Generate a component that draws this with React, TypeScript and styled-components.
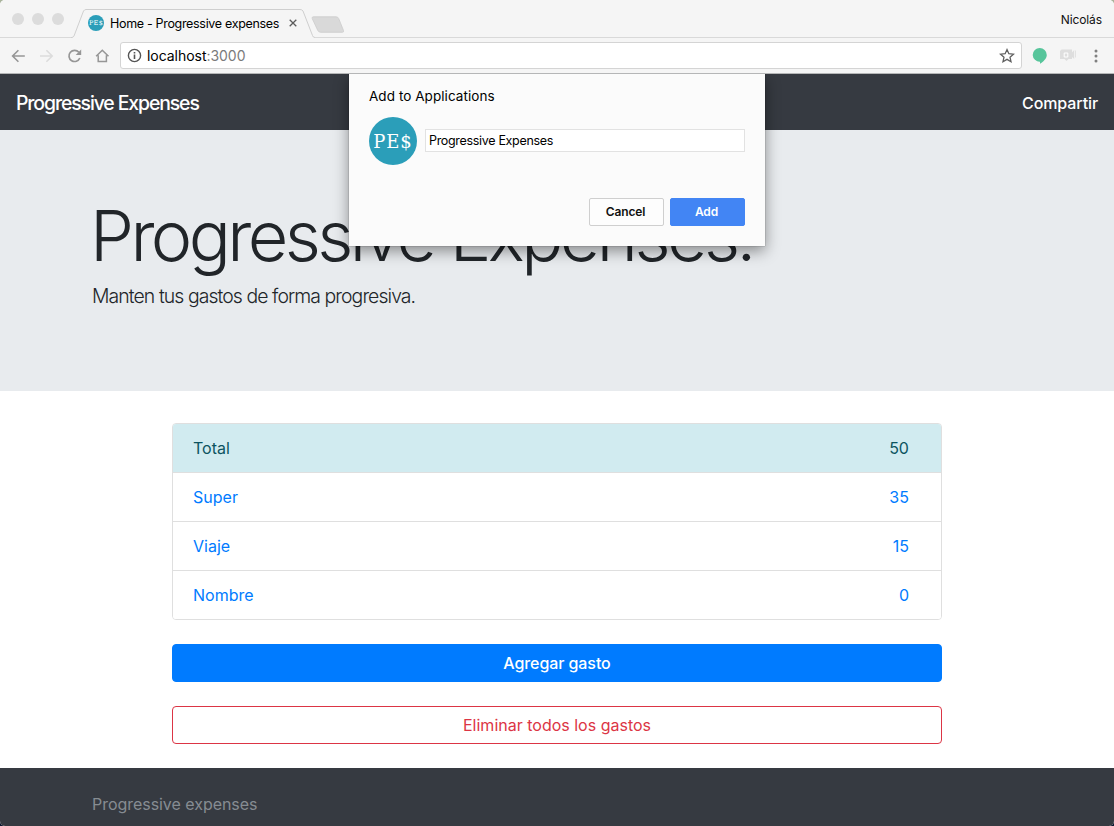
import React from "react";
import styled, { createGlobalStyle } from "styled-components";

const GlobalStyle = createGlobalStyle`
  *, *::before, *::after { box-sizing: border-box; }
  html, body { margin: 0; padding: 0; }
  body {
    font-family: Inter, "Liberation Sans", sans-serif;
    background: linear-gradient(#a9b49c 0 50%, #0c1830 50%);
    overflow: hidden;
  }
  button, input { font-family: inherit; margin: 0; }
`;

const Window = styled.div`
  width: 1114px;
  height: 826px;
  border-radius: 5px;
  overflow: hidden;
  background: #fff;
  display: flex;
  flex-direction: column;
  position: relative;
`;

const TabStrip = styled.div`
  height: 38px;
  flex: none;
  display: flex;
  background: #f5f5f5;
  box-shadow: inset 0 -1px #d9d9d9;
`;

const Lights = styled.div`
  display: flex;
  gap: 8px;
  padding: 13px 0 0 12px;
  width: 71px;
  flex: none;
`;

const Light = styled.span`
  width: 12px;
  height: 12px;
  border-radius: 50%;
  background: #dcdcdc;
`;

const Tab = styled.div`
  position: relative;
  width: 244px;
  flex: none;
  display: flex;
  align-items: center;
  padding: 8px 0 0 17px;
`;

const TabShape = styled.svg`
  position: absolute;
  left: 0;
  top: 8px;
`;

const Badge = styled.span<{ $size: number; $font: number }>`
  position: relative;
  width: ${(p) => p.$size}px;
  height: ${(p) => p.$size}px;
  flex: none;
  border-radius: 50%;
  background: #2b9eb9;
  color: #fff;
  display: flex;
  align-items: center;
  justify-content: center;
  font-size: ${(p) => p.$font}px;
  line-height: 1;
`;

const BadgeText = styled.span<{ $shift: number }>`
  font-family: "DejaVu Serif", serif;
  letter-spacing: 0.05em;
  padding-top: ${(p) => p.$shift}px;
  white-space: nowrap;
`;

const TabTitle = styled.span`
  position: relative;
  margin-left: 6px;
  width: 170px;
  font-size: 12.5px;
  letter-spacing: -0.32px;
  color: #000;
  white-space: nowrap;
`;

const CloseIcon = styled.svg`
  position: relative;
  margin-left: 9px;
`;

const NewTab = styled.svg`
  margin: 16px 0 0 -4px;
`;

const Profile = styled.span`
  margin: 12px 12px 0 auto;
  font-size: 12px;
  letter-spacing: -0.1px;
  line-height: 16px;
  color: #111;
`;

const Toolbar = styled.div`
  height: 36px;
  flex: none;
  display: flex;
  align-items: center;
  background: #f5f5f5;
  border-bottom: 1px solid #b5b6b7;
  padding: 0 10px;
`;

const NavIcons = styled.div`
  display: flex;
  gap: 10px;
  width: 110px;
  flex: none;
`;

const Address = styled.div`
  width: 902px;
  height: 27px;
  flex: none;
  display: flex;
  align-items: center;
  background: #fff;
  border: 1px solid #d4d4d4;
  border-radius: 3px;
  padding: 0 5px 0 5px;
`;

const Url = styled.span`
  flex: 1;
  margin-left: 4px;
  font-size: 14px;
  letter-spacing: -0.04px;
  color: #000;
  white-space: nowrap;
`;

const Port = styled.span`
  color: #7b7b7b;
`;

const Extensions = styled.div`
  display: flex;
  align-items: center;
  margin-left: 8px;
`;

const CameraIcon = styled.svg`
  margin-left: 11px;
`;

const MenuIcon = styled.svg`
  margin-left: 16px;
`;

const Navbar = styled.nav`
  height: 56px;
  flex: none;
  display: flex;
  align-items: center;
  justify-content: space-between;
  padding: 1px 16px 0;
  background: #363a41;
  color: #fff;
`;

const Brand = styled.span`
  font-size: 19.4px;
  font-weight: 450;
  letter-spacing: -1.1px;
  white-space: nowrap;
`;

const Share = styled.span`
  font-size: 16px;
  font-weight: 450;
  letter-spacing: -0.1px;
`;

const Jumbotron = styled.header`
  height: 261px;
  flex: none;
  padding: 63px 92px;
  background: #e8ebee;
  color: #212529;
`;

const Display = styled.h1`
  margin: 0 0 2px -2px;
  font-size: 70px;
  font-weight: 300;
  line-height: 85px;
  letter-spacing: -3.58px;
  white-space: nowrap;
`;

const Lead = styled.p`
  margin: 0;
  padding-top: 1px;
  font-size: 19.4px;
  font-weight: 300;
  line-height: 30px;
  letter-spacing: -0.91px;
`;

const Main = styled.main`
  width: 770px;
  margin: 32px auto 0;
  height: 345px;
  flex: none;
  display: flex;
  flex-direction: column;
  gap: 24px;
`;

const List = styled.div`
  height: 197px;
  flex: none;
  border: 1px solid #dfdfdf;
  border-radius: 4px;
  overflow: hidden;
`;

const Row = styled.div<{ $total?: boolean }>`
  display: flex;
  justify-content: space-between;
  height: ${(p) => (p.$total ? 48 : 49)}px;
  padding: 0 32px 0 20px;
  font-size: 16px;
  letter-spacing: 0.02px;
  line-height: 48px;
  color: ${(p) => (p.$total ? "#0c5460" : "#007bff")};
  background: ${(p) => (p.$total ? "#d1ebf0" : "#fff")};
  & + & { border-top: 1px solid #dfdfdf; }
`;

const ActionButton = styled.button<{ $outline?: boolean }>`
  height: 38px;
  flex: none;
  border: 1px solid ${(p) => (p.$outline ? "#dc3545" : "#007bff")};
  border-radius: 4px;
  background: ${(p) => (p.$outline ? "#fff" : "#007bff")};
  color: ${(p) => (p.$outline ? "#dc3545" : "#fff")};
  font-size: 16px;
  font-weight: ${(p) => (p.$outline ? 400 : 450)};
  letter-spacing: ${(p) => (p.$outline ? 0 : -0.08)}px;
  padding: 0;
`;

const Footer = styled.footer`
  flex: 1;
  padding: 24px 92px;
  background: #363a41;
  color: #868c92;
  font-size: 16px;
  letter-spacing: -0.04px;
  line-height: 24px;
`;

const Dialog = styled.section`
  position: absolute;
  left: 349px;
  top: 74px;
  width: 416px;
  height: 172px;
  padding: 14px 20px 20px;
  display: flex;
  flex-direction: column;
  background: #fbfbfb;
  box-shadow: 0 0 1px rgba(0, 0, 0, 0.5), 0 5px 14px rgba(0, 0, 0, 0.42);
  clip-path: inset(0 -30px -30px -30px);
`;

const DialogTitle = styled.h2`
  margin: 0;
  font-size: 13.5px;
  font-weight: 400;
  letter-spacing: 0.06px;
  line-height: 17px;
  color: #000;
`;

const DialogField = styled.div`
  margin-top: 12px;
  display: flex;
  align-items: center;
  gap: 8px;
`;

const NameInput = styled.input`
  width: 320px;
  height: 23px;
  margin-bottom: 2px;
  border: 1px solid #e2e2e2;
  background: #fff;
  padding: 1px 3px 0;
  font-size: 12.5px;
  letter-spacing: -0.32px;
  color: #000;
  outline: none;
`;

const DialogActions = styled.div`
  margin-top: auto;
  display: flex;
  justify-content: flex-end;
  gap: 6px;
`;

const DialogButton = styled.button<{ $primary?: boolean }>`
  width: 75px;
  height: 28px;
  padding: 0 2px 1px 0;
  border: 1px solid ${(p) => (p.$primary ? "#4285f4" : "#cfcfcf")};
  border-radius: 2px;
  background: ${(p) => (p.$primary ? "#4285f4" : "#fdfdfd")};
  color: ${(p) => (p.$primary ? "#fff" : "#111")};
  font-size: 12px;
  line-height: 16px;
  font-weight: 600;
  letter-spacing: -0.15px;
`;

const expenses = [
  { name: "Total", amount: 50 },
  { name: "Super", amount: 35 },
  { name: "Viaje", amount: 15 },
  { name: "Nombre", amount: 0 },
];

export default function App() {
  return (
    <>
      <GlobalStyle />
      <Window>
        <TabStrip>
          <Lights>
            <Light />
            <Light />
            <Light />
          </Lights>
          <Tab>
            <TabShape width="244" height="30" viewBox="0 0 244 30">
              <path d="M0 29.5H1Q2.500 29 3 28L12.500 3Q13.500 1.500 15 1.500H229Q231 1.500 232 3L241.500 27.500Q242 29.500 244 29.500V30H0Z" fill="#f5f5f5" />
              <path d="M0 29.500H1Q2.500 29 3 28L12.500 3Q13.500 1.500 15 1.500H229Q231 1.500 232 3L241.500 27.500Q242 29.500 244 29.500" fill="none" stroke="#cfcfcf" />
            </TabShape>
            <Badge $size={16} $font={6.5}>
              <BadgeText $shift={1}>PE$</BadgeText>
            </Badge>
            <TabTitle>Home - Progressive expenses</TabTitle>
            <CloseIcon width="8" height="8" viewBox="0 0 8 8">
              <path d="M.7.7l6.600 6.600M7.300.7L.7 7.300" stroke="#5c5c5c" strokeWidth="1.300" />
            </CloseIcon>
          </Tab>
          <NewTab width="34" height="18" viewBox="0 0 34 18">
            <path d="M2.500.8H25Q27 .8 27.700 2.500L32.500 14.500Q33 16.300 31.500 16.300H10Q7.500 16.300 6.800 14.500L1.200 2.500Q.6.8 2.500.8Z" fill="#d9d9d9" stroke="#cbcbcb" strokeWidth=".8" />
          </NewTab>
          <Profile>Nicolás</Profile>
        </TabStrip>
        <Toolbar>
          <NavIcons>
            <svg width="18" height="18" viewBox="0 0 18 18" fill="none" stroke="#969696" strokeWidth="1.600">
              <path d="M14.800 9H2.800M8.400 3.200L2.600 9l5.800 5.800" />
            </svg>
            <svg width="18" height="18" viewBox="0 0 18 18" fill="none" stroke="#dcdcdc" strokeWidth="1.600">
              <path d="M2 9h12M8.400 3.200L14.200 9l-5.800 5.800" />
            </svg>
            <svg width="18" height="18" viewBox="0 0 18 18" fill="none" stroke="#969696" strokeWidth="1.700">
              <path d="M13.800 11a5.600 5.600 0 1 1-.9-5.700" />
              <path d="M15.200 2.500V8H9.700Z" fill="#969696" stroke="none" />
            </svg>
            <svg width="18" height="18" viewBox="0 0 18 18" fill="none" stroke="#969696" strokeWidth="1.500">
              <path d="M2.100 9.300L8.300 3.200l6.200 6.100M4.200 8.300v6.300h8.200V8.300" />
            </svg>
          </NavIcons>
          <Address>
            <svg width="17" height="17" viewBox="0 0 17 17">
              <circle cx="8.500" cy="8.500" r="6.100" fill="none" stroke="#555" strokeWidth="1.400" />
              <path d="M7.700 7.500h1.600v4.500H7.700zM7.700 4.900h1.600v1.600H7.700z" fill="#555" />
            </svg>
            <Url>
              localhost<Port>:3000</Port>
            </Url>
            <svg width="18" height="18" viewBox="0 0 18 18">
              <path d="M9 2.600l1.850 4.150 4.600.45-3.450 3.050 1 4.450L9 12.350 5 14.700l1-4.450L2.550 7.200l4.600-.45Z" fill="none" stroke="#606060" strokeWidth="1.300" />
            </svg>
          </Address>
          <Extensions>
            <svg width="18" height="18" viewBox="0 0 18 18">
              <path d="M9.700 1.100a7 7 0 0 1 7.100 6.800c0 3.700-3.200 6.300-6.800 8.900V14.700A7 7 0 0 1 2.700 8a7 7 0 0 1 7-6.900Z" fill="#57c59b" />
            </svg>
            <CameraIcon width="18" height="18" viewBox="0 0 18 18">
              <path d="M2.500 2.500H13V12H9.500L7.500 14 5.500 12H1V4Z" fill="#dedede" />
              <path d="M13 5.500L15.200 3v9L13 10ZM16 3.500h.8v7H16z" fill="#dedede" />
              <path d="M5.200 6h3.600v4H5.200z" fill="none" stroke="#fff" strokeWidth="1" />
            </CameraIcon>
            <MenuIcon width="6" height="18" viewBox="0 0 6 18" fill="#808080">
              <circle cx="3" cy="4" r="1.500" />
              <circle cx="3" cy="9" r="1.500" />
              <circle cx="3" cy="14" r="1.500" />
            </MenuIcon>
          </Extensions>
        </Toolbar>
        <Navbar>
          <Brand>Progressive Expenses</Brand>
          <Share>Compartir</Share>
        </Navbar>
        <Jumbotron>
          <Display>Progressive Expenses.</Display>
          <Lead>Manten tus gastos de forma progresiva.</Lead>
        </Jumbotron>
        <Main>
          <List>
            {expenses.map((e, i) => (
              <Row key={e.name} $total={i === 0}>
                <span>{e.name}</span>
                <span>{e.amount}</span>
              </Row>
            ))}
          </List>
          <ActionButton>Agregar gasto</ActionButton>
          <ActionButton $outline>Eliminar todos los gastos</ActionButton>
        </Main>
        <Footer>Progressive expenses</Footer>
        <Dialog>
          <DialogTitle>Add to Applications</DialogTitle>
          <DialogField>
            <Badge $size={48} $font={18}>
              <BadgeText $shift={2}>PE$</BadgeText>
            </Badge>
            <NameInput defaultValue="Progressive Expenses" />
          </DialogField>
          <DialogActions>
            <DialogButton>Cancel</DialogButton>
            <DialogButton $primary>Add</DialogButton>
          </DialogActions>
        </Dialog>
      </Window>
    </>
  );
}
